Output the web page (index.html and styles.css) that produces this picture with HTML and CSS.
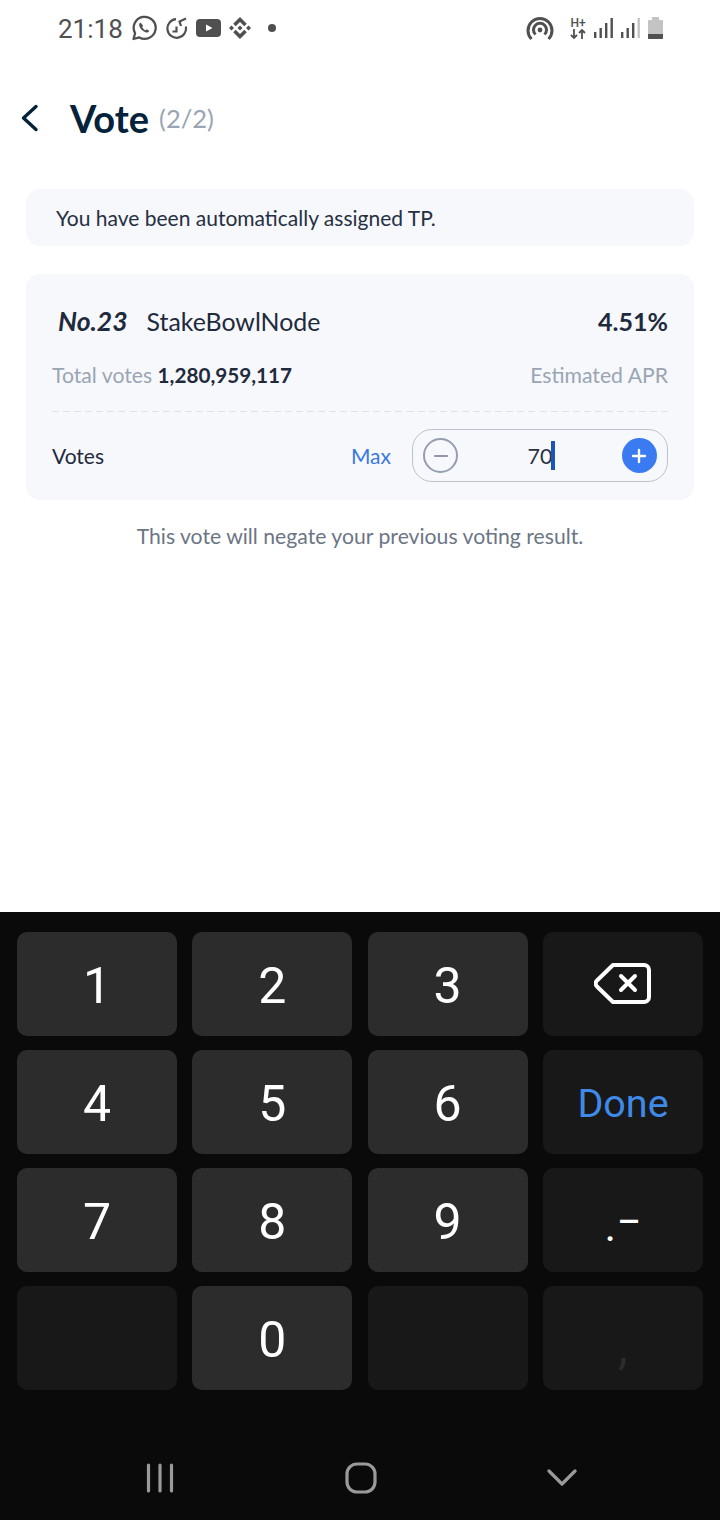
FILE: index.html
```html
<!DOCTYPE html>
<html lang="en">
<head>
    <meta charset="UTF-8">
    <meta name="viewport" content="width=device-width, initial-scale=1.0">
    <title>Vote</title>
    <link rel="stylesheet" href="styles.css">
</head>
<body>
    <div class="status-bar">
        <div class="status-left">
            <span class="clock">21:18</span>
            <svg class="st-icon icon-chat" width="26" height="26" viewBox="0 0 26 26"><path d="M2.500 24l1.600-5.800A11 11 0 1 1 8.300 22.400z" fill="none" stroke="#505050" stroke-width="2.300" stroke-linejoin="round"/><path d="M9.500 7.500c-1.300.8-1.700 2.300-1 3.900 1.200 2.700 3.200 4.700 6 5.800 1.600.6 3 .2 3.800-1.200l-2.500-1.800-1.300 1.100c-1.500-.7-2.600-1.800-3.300-3.300l1-1.300z" fill="#505050"/></svg>
            <svg class="st-icon" width="22" height="22" viewBox="0 0 22 22" fill="none" stroke="#505050" stroke-width="2.200"><path d="M10 2.200A9.300 9.300 0 1 0 19.800 9.500"/><path d="M20 1.500l-6.500 3 1.500 4.500"/><path d="M10.500 9.500v5H6.500"/></svg>
            <svg class="st-icon" width="25" height="18" viewBox="0 0 25 18"><rect width="25" height="18" rx="4" fill="#505050"/><path d="M10 5.500l6.500 3.500-6.500 3.500z" fill="#fff"/></svg>
            <svg class="st-icon" width="22" height="22" viewBox="0 0 126.610 126.610" fill="#505050"><path d="M38.730 53.200l24.590-24.580 24.600 24.600 14.300-14.310L63.320 0 24.430 38.900zM0 63.310l14.300-14.310 14.310 14.310-14.310 14.300zM38.730 73.410l24.590 24.590 24.600-24.600 14.310 14.290-38.900 38.910-38.910-38.880-.02-.02zM98 63.310l14.300-14.310 14.310 14.300-14.310 14.320z"/><path d="M77.830 63.300L63.320 48.780 48.810 63.280l14.510 14.500z"/></svg>
            <span class="dot"></span>
        </div>
        <div class="status-right">
            <svg width="28" height="25" viewBox="0 0 28 25" fill="none" stroke="#505050" stroke-width="3"><path d="M5.500 23A12 12 0 1 1 22.500 23"/><path d="M9.500 18.500a6.500 6.500 0 1 1 9 0"/><circle cx="14" cy="14" r="2.400" fill="#505050" stroke="none"/></svg>
            <div class="net-type">
                <span class="net-label">H+</span>
                <svg width="16" height="10" viewBox="0 0 16 10" fill="none" stroke="#505050" stroke-width="1.800"><path d="M4 0v9M1 6l3 3 3-3"/><path d="M12 10V1M9 4l3-3 3 3"/></svg>
            </div>
            <svg width="20" height="20" viewBox="0 0 20 20" fill="#505050"><rect x="0" y="14" width="2.400" height="6"/><rect x="5.500" y="10" width="2.400" height="10"/><rect x="11" y="5" width="2.400" height="15"/><rect x="16.500" y="0" width="2.400" height="20"/></svg>
            <svg width="20" height="20" viewBox="0 0 20 20" fill="#505050"><rect x="0" y="14" width="2.400" height="6"/><rect x="5.500" y="10" width="2.400" height="10"/><rect x="11" y="5" width="2.400" height="15"/><rect x="16.500" y="0" width="2.400" height="20" fill="#c4c4c4"/></svg>
            <svg width="15" height="22" viewBox="0 0 15 22"><path d="M4 0h7v3h3a1 1 0 0 1 1 1v17a1 1 0 0 1-1 1H1a1 1 0 0 1-1-1V4a1 1 0 0 1 1-1h3z" fill="#c4c4c4"/><path d="M0 17h15v4a1 1 0 0 1-1 1H1a1 1 0 0 1-1-1z" fill="#505050"/></svg>
        </div>
    </div>

    <div class="page-head">
        <svg class="back" width="20" height="28" viewBox="0 0 20 28" fill="none" stroke="#04223a" stroke-width="3.400" stroke-linecap="round" stroke-linejoin="round"><path d="M16 2.500L3.500 14 16 25.500"/></svg>
        <h1>Vote</h1>
        <span class="step">(2/2)</span>
    </div>

    <div class="notice">You have been automatically assigned TP.</div>

    <div class="card">
        <div class="row">
            <div class="node">
                <span class="node-no">No.23</span>
                <span class="node-name">StakeBowlNode</span>
            </div>
            <span class="apr">4.51%</span>
        </div>
        <div class="row row-sub">
            <span class="muted">Total votes <b>1,280,959,117</b></span>
            <span class="muted">Estimated APR</span>
        </div>
        <div class="divider"></div>
        <div class="row row-votes">
            <span class="votes-label">Votes</span>
            <div class="votes-right">
                <span class="max">Max</span>
                <div class="stepper">
                    <span class="step-btn minus"><svg width="16" height="16" viewBox="0 0 16 16"><path d="M2 8h12" stroke="#8e98a8" stroke-width="2.200" stroke-linecap="round"/></svg></span>
                    <span class="amount"><span class="amount-num">70</span><span class="caret"></span></span>
                    <span class="step-btn plus"><svg width="16" height="16" viewBox="0 0 16 16"><path d="M2 8h12M8 2v12" stroke="#fff" stroke-width="2.400" stroke-linecap="round"/></svg></span>
                </div>
            </div>
        </div>
    </div>

    <p class="warning">This vote will negate your previous voting result.</p>

    <div class="keyboard">
        <div class="keys">
            <div class="key">1</div>
            <div class="key">2</div>
            <div class="key">3</div>
            <div class="key key-fn"><svg width="58" height="44" viewBox="0 0 58 44" fill="none" stroke="#fff" stroke-width="4" stroke-linejoin="round" stroke-linecap="round"><path d="M19 3h31a5 5 0 0 1 5 5v27a5 5 0 0 1-5 5H19L3 24.500a4 4 0 0 1 0-6z"/><path d="M27 14l14 14M41 14L27 28"/></svg></div>
            <div class="key">4</div>
            <div class="key">5</div>
            <div class="key">6</div>
            <div class="key key-fn key-done">Done</div>
            <div class="key">7</div>
            <div class="key">8</div>
            <div class="key">9</div>
            <div class="key key-fn key-sym">.<span class="sym-dash">−</span></div>
            <div class="key key-fn"></div>
            <div class="key">0</div>
            <div class="key key-fn"></div>
            <div class="key key-fn key-comma">,</div>
        </div>
        <div class="nav-bar">
            <svg width="30" height="30" viewBox="0 0 30 30" fill="none" stroke="#9a9a9a" stroke-width="3.200" stroke-linecap="round"><path d="M3.500 2v26M15 2v26M26.500 2v26"/></svg>
            <svg width="32" height="32" viewBox="0 0 32 32" fill="none" stroke="#9a9a9a" stroke-width="3.200"><rect x="2" y="2" width="28" height="28" rx="10"/></svg>
            <svg width="30" height="20" viewBox="0 0 30 20" fill="none" stroke="#9a9a9a" stroke-width="3.200" stroke-linecap="round" stroke-linejoin="round"><path d="M2 3l13 13L28 3"/></svg>
        </div>
    </div>
</body>
</html>
```

FILE: styles.css
```css
body {
    margin: 0;
    width: 720px;
    height: 1520px;
    display: flex;
    flex-direction: column;
    overflow: hidden;
    background-color: #fff;
    font-family: 'Lato', sans-serif;
    color: #1f2a3d;
}

/* status bar */
.status-bar {
    height: 56px;
    padding: 0 57px 0 58px;
    display: flex;
    justify-content: space-between;
    align-items: center;
    flex-shrink: 0;
}

.status-left,
.status-right {
    display: flex;
    align-items: center;
}

.clock {
    font-family: 'Roboto', sans-serif;
    font-size: 26px;
    color: #505050;
    margin-top: 2px;
    margin-right: 8px;
}

.st-icon {
    margin-right: 8px;
}

.icon-chat {
    margin-right: 9px;
}

.dot {
    width: 8px;
    height: 8px;
    margin-left: 9px;
    border-radius: 50%;
    background-color: #505050;
}

.status-right {
    gap: 7px;
}

.net-type {
    width: 18px;
    margin-left: 8px;
    display: flex;
    flex-direction: column;
    align-items: center;
}

.net-label {
    font-family: 'Roboto', sans-serif;
    font-size: 12px;
    line-height: 12px;
    font-weight: 500;
    color: #505050;
}

/* header */
.page-head {
    height: 62px;
    margin-top: 31px;
    margin-bottom: 1px;
    padding-left: 20px;
    display: flex;
    align-items: center;
    flex-shrink: 0;
}

.back {
    margin-right: 30px;
}

.page-head h1 {
    margin: 0 10px 0 0;
    font-size: 38px;
    font-weight: 700;
    color: #04223a;
}

.step {
    font-size: 25.5px;
    color: #9aa5b4;
}

/* notice */
.notice {
    height: 57px;
    margin: 39px 26px 0;
    padding-left: 30px;
    display: flex;
    align-items: center;
    background-color: #f6f8fb;
    border-radius: 14px;
    font-size: 21px;
    color: #263043;
    flex-shrink: 0;
}

/* card */
.card {
    height: 226px;
    margin: 28px 26px 0;
    padding: 31px 26px 0;
    box-sizing: border-box;
    background-color: #f6f8fb;
    border-radius: 14px;
    flex-shrink: 0;
    display: flex;
    flex-direction: column;
}

.row {
    display: flex;
    justify-content: space-between;
    align-items: center;
}

.node {
    display: flex;
    align-items: center;
}

.node-no {
    margin-left: 6px;
    margin-right: 19px;
    font-size: 26.5px;
    font-weight: 700;
    font-style: italic;
}

.node-name {
    font-size: 24.9px;
}

.apr {
    font-size: 25px;
    font-weight: 700;
}

.row-sub {
    margin-top: 25px;
}

.muted {
    font-size: 21.2px;
    color: #9aa5b4;
}

.muted b {
    font-size: 20.7px;
    color: #1f2a3d;
}

.divider {
    height: 1px;
    margin-top: 23px;
    background-image: repeating-linear-gradient(to right, #dfe2e8 0, #dfe2e8 7px, transparent 7px, transparent 11.080px);
}

.row-votes {
    margin-top: 17px;
}

.votes-label {
    font-size: 21px;
}

.votes-right {
    display: flex;
    align-items: center;
}

.max {
    font-size: 21px;
    color: #3b78e0;
    margin-right: 21px;
}

.stepper {
    width: 256px;
    height: 53px;
    box-sizing: border-box;
    padding: 0 10px;
    display: flex;
    align-items: center;
    justify-content: space-between;
    border: 1px solid #bcc2cc;
    border-radius: 20px;
}

.step-btn {
    width: 35px;
    height: 35px;
    box-sizing: border-box;
    border-radius: 50%;
    display: flex;
    align-items: center;
    justify-content: center;
}

.minus {
    border: 2px solid #959eae;
}

.plus {
    background-color: #3b7bf2;
}

.amount {
    display: flex;
    align-items: center;
    padding-left: 3px;
    font-size: 21.5px;
    color: #2b3242;
}

.caret {
    width: 4px;
    height: 29px;
    margin-left: -1px;
    background-color: #1a56b8;
}

.warning {
    margin: 23px 0 0;
    text-align: center;
    font-size: 21.2px;
    color: #6c7585;
}

/* keyboard */
.keyboard {
    margin-top: auto;
    height: 608px;
    box-sizing: border-box;
    padding: 20px 17px 0;
    background-color: #0a0a0a;
    display: flex;
    flex-direction: column;
    flex-shrink: 0;
}

.keys {
    display: grid;
    grid-template-columns: repeat(4, 160px);
    grid-auto-rows: 104px;
    column-gap: 15.330px;
    row-gap: 14px;
}

.key {
    padding-top: 4px;
    box-sizing: border-box;
    display: flex;
    align-items: center;
    justify-content: center;
    background-color: #2c2c2c;
    border-radius: 10px;
    font-family: 'Roboto', sans-serif;
    font-size: 50px;
    color: #fff;
}

.key-fn {
    padding-top: 0;
    background-color: #181818;
}

.key-done {
    padding-top: 3px;
    font-size: 39.5px;
    color: #3f8ae8;
}

.key-sym {
    padding-top: 12px;
    font-size: 44px;
}

.sym-dash {
    margin-top: -8px;
}

.key-comma {
    padding-top: 15px;
    font-size: 50px;
    color: #2c2c2c;
}

.nav-bar {
    flex: 1;
    padding: 46px 126px 0 128px;
    display: flex;
    align-items: center;
    justify-content: space-between;
}
```
